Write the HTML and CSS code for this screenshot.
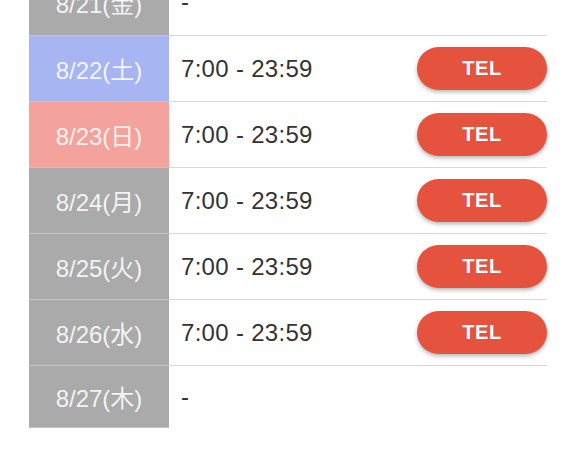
FILE: index.html
```html
<!DOCTYPE html>
<html lang="ja">
<head>
    <meta charset="UTF-8">
    <meta name="viewport" content="width=device-width, initial-scale=1.0">
    <title>営業時間</title>
    <link rel="stylesheet" href="styles.css">
</head>
<body>
    <div class="schedule">
        <table class="hours">
            <tr class="first">
                <td class="day">8/21(金)</td>
                <td class="time"><div class="slot">-</div></td>
            </tr>
            <tr>
                <td class="day sat">8/22(土)</td>
                <td class="time"><div class="slot"><span>7:00 - 23:59</span><button class="tel">TEL</button></div></td>
            </tr>
            <tr>
                <td class="day sun">8/23(日)</td>
                <td class="time"><div class="slot"><span>7:00 - 23:59</span><button class="tel">TEL</button></div></td>
            </tr>
            <tr>
                <td class="day">8/24(月)</td>
                <td class="time"><div class="slot"><span>7:00 - 23:59</span><button class="tel">TEL</button></div></td>
            </tr>
            <tr>
                <td class="day">8/25(火)</td>
                <td class="time"><div class="slot"><span>7:00 - 23:59</span><button class="tel">TEL</button></div></td>
            </tr>
            <tr>
                <td class="day">8/26(水)</td>
                <td class="time"><div class="slot"><span>7:00 - 23:59</span><button class="tel">TEL</button></div></td>
            </tr>
            <tr class="last">
                <td class="day">8/27(木)</td>
                <td class="time"><div class="slot">-</div></td>
            </tr>
        </table>
    </div>
</body>
</html>
```

FILE: styles.css
```css
body {
    margin: 0;
    padding: 0;
    background-color: #fff;
    font-family: "Liberation Sans", Arial, "Noto Sans CJK JP", sans-serif;
    overflow: hidden;
}

.schedule {
    padding: 0 29px;
    margin-top: -31px;
}

.hours {
    width: 100%;
    border-collapse: collapse;
}

.hours td {
    height: 61px;
    padding: 0;
    vertical-align: middle;
    font-size: 24px;
}

.hours tr.first td {
    height: 66px;
}

.hours tr {
    border-bottom: 1px solid #d9d9d9;
}

.hours tr.last {
    border-bottom: none;
}

.day {
    width: 140px;
    text-align: center;
    color: rgba(255, 255, 255, 0.88);
    background-color: #aaaaaa;
    border-bottom: 1px solid #c4c4c4;
}

.day.sat {
    background-color: #a8b5f3;
}

.day.sun {
    background-color: #f3a39b;
}

.slot {
    display: flex;
    justify-content: space-between;
    align-items: center;
    padding-left: 12px;
    color: #333;
    letter-spacing: 0.3px;
}

.tel {
    width: 130px;
    height: 43px;
    margin: 11px 0;
    border: none;
    border-radius: 22px;
    background-color: #e5533f;
    color: #fff;
    font-family: "Liberation Sans", Arial, sans-serif;
    font-size: 20px;
    font-weight: bold;
    letter-spacing: 0.5px;
    box-shadow: 0 2px 4px rgba(0, 0, 0, 0.3);
    cursor: pointer;
}
```
